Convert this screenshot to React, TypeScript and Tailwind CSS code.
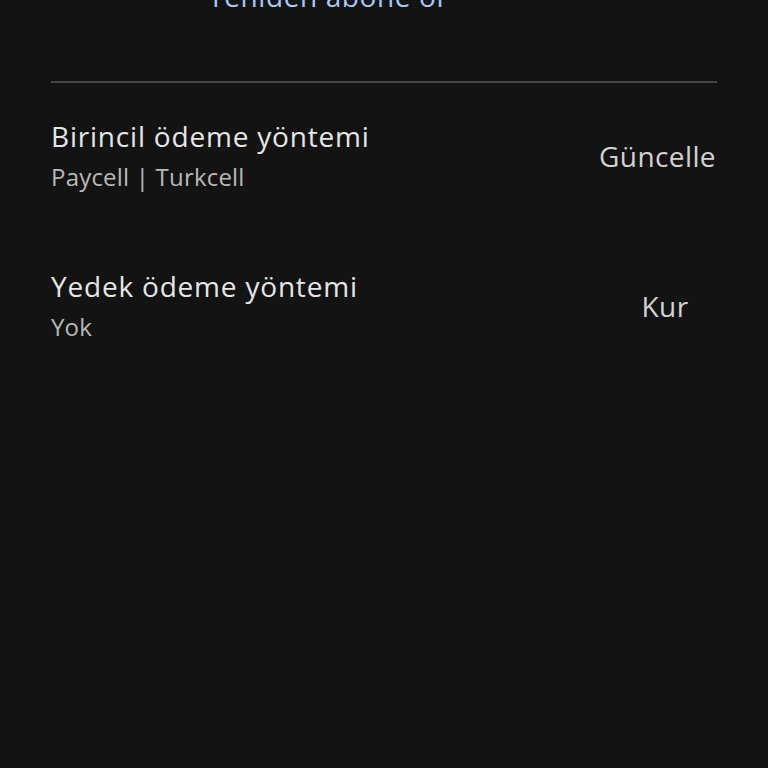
const rows = [
  { title: "Birincil ödeme yöntemi", detail: "Paycell | Turkcell", action: "Güncelle" },
  { title: "Yedek ödeme yöntemi", detail: "Yok", action: "Kur" },
];

export default function App() {
  return (
    <div
      className="h-screen w-full overflow-hidden bg-[#131313]"
      style={{ fontFamily: "'Open Sans', Roboto, sans-serif" }}
    >
      <div className="mt-[-22px] pl-[208px]">
        <button className="text-[28px] leading-[36px] tracking-[0.6px] text-[#a8c7fa]">Yeniden abone ol</button>
      </div>

      <div className="mx-[51px] mt-[67px] h-[2px] bg-[#444746]" />

      <div className="mt-[35px] flex flex-col gap-[75px] pl-[51px] pr-[40px]">
        {rows.map((row) => (
          <div key={row.title} className="flex items-center justify-between">
            <div className="flex flex-col">
              <span className="text-[28px] leading-[36px] tracking-[0.8px] text-[#e6e6e6]">{row.title}</span>
              <span className="mt-[7px] text-[24px] leading-[32px] tracking-[0.2px] text-[#b9b9b9]">{row.detail}</span>
            </div>
            <button className="min-w-[126px] px-3 text-center text-[28px] leading-[36px] tracking-[0.4px] text-[#d2d2d2]">
              {row.action}
            </button>
          </div>
        ))}
      </div>
    </div>
  );
}
